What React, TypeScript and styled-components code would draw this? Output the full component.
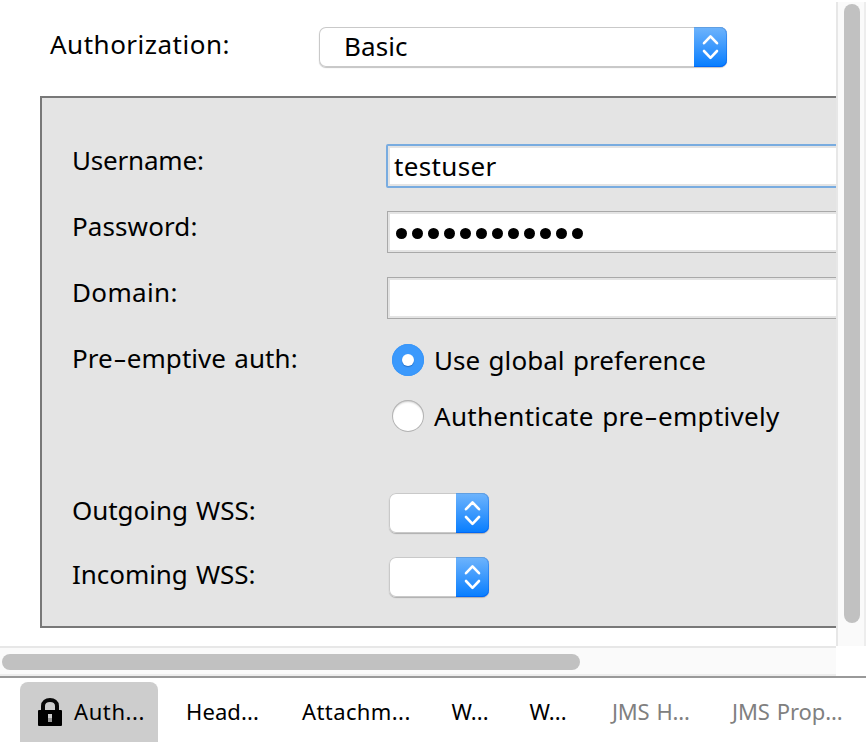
import React from "react";
import styled, { createGlobalStyle, css } from "styled-components";

const GlobalStyle = createGlobalStyle`
  * { box-sizing: border-box; }
  html, body { margin: 0; padding: 0; background: #fff; overflow: hidden; }
`;

const Window = styled.div`
  width: 866px;
  height: 744px;
  display: grid;
  grid-template-rows: 646px 30px 66px;
  background: #fff;
  color: #000;
  font-family: "Noto Sans", "Open Sans", sans-serif;
  font-size: 26px;
  line-height: 40px;
  white-space: nowrap;
  overflow: hidden;
`;

const Main = styled.div`
  display: grid;
  grid-template-columns: 836px 30px;
  min-height: 0;
`;

const Viewport = styled.div`
  overflow: hidden;
`;

const Text = styled.span<{ $ls?: number }>`
  display: block;
  letter-spacing: ${(p) => p.$ls ?? 0}px;
  word-spacing: 1.5px;
`;

const Hyphen = styled.span`
  display: inline-block;
  width: 14px;
  text-align: center;
  letter-spacing: 0;
  transform: scaleX(1.6);
`;

const AuthRow = styled.div`
  display: grid;
  grid-template-columns: 269px auto;
  align-items: start;
  height: 96px;
  padding: 24px 0 0 50px;
`;

const Panel = styled.section`
  width: 900px;
  height: 532px;
  margin-left: 40px;
  padding: 35px 0 0 30px;
  border: 2px solid #787878;
  background: #e4e4e4;
`;

const FormRow = styled.div<{ $height: number; $labelTop: number }>`
  display: grid;
  grid-template-columns: 314px 1fr;
  height: ${(p) => p.$height}px;

  > :first-child {
    margin-top: ${(p) => p.$labelTop}px;
  }
`;

const Field = styled.div<{ $focused?: boolean }>`
  display: flex;
  align-items: center;
  align-self: center;
  background: #fff;
  ${(p) =>
    p.$focused
      ? css`
          height: 44px;
          padding-left: 6px;
          border: 2px solid #79ace0;
          border-radius: 2px;
        `
      : css`
          height: 42px;
          margin-left: 1px;
          padding-left: 8px;
          border: 1px solid #a9a9a9;
        `}
  box-shadow: inset 0 0 0 2px #e4e4e4;
`;

const Dots = styled.div`
  display: flex;
  gap: 5px;
  padding-top: 3px;
`;

const Dot = styled.i`
  width: 11px;
  height: 11px;
  border-radius: 50%;
  background: #000;
`;

const SelectBox = styled.div<{ $width: number; $top?: number }>`
  display: flex;
  justify-content: space-between;
  width: ${(p) => p.$width}px;
  height: 40px;
  margin-top: ${(p) => p.$top ?? 0}px;
  border-radius: 7px;
  background: #fff;
  box-shadow: inset 0 0 0 1px #c9c9c9, 0 1px 1px rgba(0, 0, 0, 0.24);
`;

const SelectValue = styled(Text)`
  padding-left: 25px;
  line-height: 38px;
`;

const Stepper = styled.span`
  display: flex;
  align-items: center;
  justify-content: center;
  width: 33px;
  height: 40px;
  border-radius: 0 7px 7px 0;
  background: linear-gradient(#6eb4fc, #3c99fd 50%, #067dff);
  box-shadow: inset 0 1px 0 #609fe2, inset 0 -1px 0 #0067f6,
    inset -1px 0 0 rgba(0, 90, 220, 0.35);
`;

const RadioGroup = styled.div`
  display: flex;
  flex-direction: column;
  gap: 16px;
  padding: 9px 0 0 6px;
`;

const RadioOption = styled.div`
  display: flex;
  align-items: center;
  gap: 10px;
  height: 40px;
`;

const RadioMark = styled.span<{ $checked?: boolean }>`
  display: flex;
  align-items: center;
  justify-content: center;
  width: 32px;
  height: 32px;
  border-radius: 50%;
  background: ${(p) => (p.$checked ? "#3b99fc" : "#fff")};
  box-shadow: ${(p) =>
    p.$checked
      ? "inset 0 0 0 1px #3a96f8"
      : "inset 0 0 0 1px #b3b3b3, inset 0 2px 2px rgba(0,0,0,.2)"};

  &::after {
    content: "";
    display: ${(p) => (p.$checked ? "block" : "none")};
    width: 12px;
    height: 12px;
    border-radius: 50%;
    background: #fff;
    box-shadow: 0 1px 1px rgba(0, 50, 120, 0.4);
  }
`;

const Indented = styled.div`
  padding-left: 3px;
`;

const VScroll = styled.div`
  margin-top: 2px;
  padding: 2px 4px 0 6px;
  border-left: 2px solid #e7e7e7;
  border-right: 2px solid #ededed;
  background: #fafafa;
`;

const VThumb = styled.div`
  width: 16px;
  height: 619px;
  border-radius: 8px;
  background: #c1c1c1;
`;

const HScroll = styled.div`
  width: 836px;
  padding: 6px 0 0 2px;
  border-top: 2px solid #e7e7e7;
  border-bottom: 2px solid #ededed;
  background: #fafafa;
`;

const HThumb = styled.div`
  width: 578px;
  height: 16px;
  border-radius: 8px;
  background: #c1c1c1;
`;

const TabBar = styled.nav`
  display: flex;
  padding: 4px 0 0 20px;
  border-top: 2px solid #999;
  font-size: 22px;
`;

const Tab = styled.div<{ $width: number; $active?: boolean; $disabled?: boolean }>`
  display: flex;
  flex: none;
  width: ${(p) => p.$width}px;
  height: 60px;
  padding: 9px 0 0 ${(p) => (p.$active ? 18 : 28)}px;
  gap: 12px;
  border-radius: 8px 8px 0 0;
  background: ${(p) => (p.$active ? "#cdcdcd" : "transparent")};
  color: ${(p) => (p.$disabled ? "#808080" : "#000")};
`;

const LockSvg = styled.svg`
  flex: none;
  margin-top: 7px;
`;

const Lock = () => (
  <LockSvg width="24" height="28" viewBox="0 0 24 28">
    <path d="M5 13V8C5 4 8 2 12 2s7 2 7 6V13" fill="none" stroke="#080808" strokeWidth="4" />
    <rect x="0" y="12" width="24" height="16" rx="1" fill="#000" />
    <rect x="10" y="16" width="4" height="8" fill="#999" />
    <rect x="10" y="16" width="4" height="4" fill="#ccc" />
  </LockSvg>
);

const Select = ({ width, top, value, ls }: { width: number; top?: number; value?: string; ls?: number }) => (
  <SelectBox $width={width} $top={top}>
    <SelectValue $ls={ls}>{value}</SelectValue>
    <Stepper>
      <svg width="17" height="26" viewBox="0 0 17 26" fill="none" stroke="#fff" strokeWidth="2.6" strokeLinecap="round" strokeLinejoin="round">
        <path d="M2 9.2L8.5 2.4L15 9.2M2 17L8.5 23.8L15 17" />
      </svg>
    </Stepper>
  </SelectBox>
);

const tabs = [
  { label: "Head...", width: 116, ls: 0.1 },
  { label: "Attachm...", width: 149.5, ls: 0.4 },
  { label: "W...", width: 78, ls: 0 },
  { label: "W...", width: 82.5, ls: 0 },
  { label: "JMS H...", width: 120, ls: -0.2, disabled: true },
  { label: "JMS Prop...", width: 140, ls: -0.1, disabled: true },
];

export default function App() {
  return (
    <>
      <GlobalStyle />
      <Window>
        <Main>
          <Viewport>
            <AuthRow>
              <Text $ls={0.5}>Authorization:</Text>
              <Select width={408} top={3} value="Basic" ls={0.1} />
            </AuthRow>
            <Panel>
              <FormRow $height={66} $labelTop={7}>
                <Text $ls={-0.2}>Username:</Text>
                <Field $focused>
                  <Text $ls={0.35}>testuser</Text>
                </Field>
              </FormRow>
              <FormRow $height={66} $labelTop={7}>
                <Text $ls={0.1}>Password:</Text>
                <Field>
                  <Dots>
                    {Array.from({ length: 12 }, (_, i) => (
                      <Dot key={i} />
                    ))}
                  </Dots>
                </Field>
              </FormRow>
              <FormRow $height={66} $labelTop={7}>
                <Text $ls={0.35}>Domain:</Text>
                <Field />
              </FormRow>
              <FormRow $height={162} $labelTop={7}>
                <Text $ls={0.05}>
                  Pre<Hyphen>-</Hyphen>emptive auth:
                </Text>
                <RadioGroup>
                  <RadioOption>
                    <RadioMark $checked />
                    <Text $ls={0.05}>Use global preference</Text>
                  </RadioOption>
                  <RadioOption>
                    <RadioMark />
                    <Text $ls={0.3}>
                      Authenticate pre<Hyphen>-</Hyphen>emptively
                    </Text>
                  </RadioOption>
                </RadioGroup>
              </FormRow>
              <FormRow $height={64} $labelTop={-3}>
                <Text $ls={-0.05}>Outgoing WSS:</Text>
                <Indented>
                  <Select width={100} />
                </Indented>
              </FormRow>
              <FormRow $height={64} $labelTop={-3}>
                <Text $ls={-0.05}>Incoming WSS:</Text>
                <Indented>
                  <Select width={100} />
                </Indented>
              </FormRow>
            </Panel>
          </Viewport>
          <VScroll>
            <VThumb />
          </VScroll>
        </Main>
        <HScroll>
          <HThumb />
        </HScroll>
        <TabBar>
          <Tab $width={138} $active>
            <Lock />
            <Text $ls={0.6}>Auth...</Text>
          </Tab>
          {tabs.map((tab, i) => (
            <Tab key={i} $width={tab.width} $disabled={tab.disabled}>
              <Text $ls={tab.ls}>{tab.label}</Text>
            </Tab>
          ))}
        </TabBar>
      </Window>
    </>
  );
}
